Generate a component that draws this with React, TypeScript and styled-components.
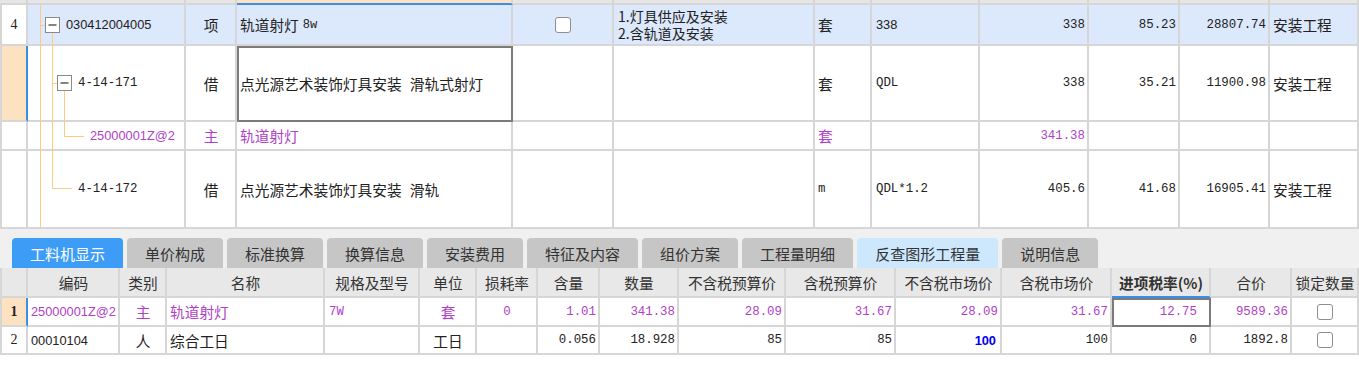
import React from "react";
import styled, { createGlobalStyle, css } from "styled-components";

const GlobalStyle = createGlobalStyle`
  html, body {
    margin: 0;
    padding: 0;
    background: #ffffff;
  }
  body {
    font-family: "Noto Sans CJK SC", "Noto Sans", sans-serif;
    color: #222222;
  }
`;

const LINE = "#d6d6d6";
const PURPLE = "#b040c8";
const PEACH = "#fde2c2";
const SELECT_BLUE = "#3a8ee6";

const TOP_COLS = "28px 158px 51px 276px 101px 201px 57px 108px 109px 91px 90px 89px";
const BOTTOM_COLS =
  "28px 92px 47px 158px 95px 57px 61px 62px 79px 107px 110px 106px 110px 99px 81px 67px";

type Font = "cjk" | "mono" | "sans" | "serif";
type Align = "left" | "center" | "right";

const fonts = {
  cjk: css`
    font-family: "Noto Sans CJK SC", sans-serif;
    font-size: 14.7px;
    word-spacing: 5px;
  `,
  mono: css`
    font-family: "Liberation Mono", "Noto Sans CJK SC", monospace;
    font-size: 12.4px;
  `,
  sans: css`
    font-family: "Liberation Sans", "Noto Sans CJK SC", sans-serif;
    font-size: 12.8px;
  `,
  serif: css`
    font-family: "Liberation Serif", serif;
    font-size: 14px;
  `,
};

const justify = { left: "flex-start", center: "center", right: "flex-end" };

const Page = styled.div`
  width: 1359px;
  display: flex;
  flex-direction: column;
`;

const TopTable = styled.div`
  position: relative;
  display: flex;
  flex-direction: column;
`;

const Row = styled.div<{ $cols: string; $h: number; $bg?: string }>`
  display: grid;
  grid-template-columns: ${(p) => p.$cols};
  height: ${(p) => p.$h}px;
  background: ${(p) => p.$bg ?? "#ffffff"};
`;

const Cell = styled.div<{
  $align?: Align;
  $color?: string;
  $font?: Font;
  $bold?: boolean;
  $focus?: boolean;
  $pl?: number;
  $pr?: number;
  $mark?: "row" | "col";
  $bg?: string;
}>`
  display: flex;
  align-items: center;
  justify-content: ${(p) => justify[p.$align ?? "left"]};
  box-sizing: border-box;
  min-width: 0;
  border-right: 2px solid ${LINE};
  border-bottom: 2px solid ${LINE};
  padding: 0 ${(p) => p.$pr ?? 2}px 0 ${(p) => p.$pl ?? 3}px;
  overflow: hidden;
  white-space: nowrap;
  color: ${(p) => p.$color ?? "#222222"};
  ${(p) => p.$bg && `background: ${p.$bg};`}
  ${(p) => fonts[p.$font ?? "cjk"]}
  font-weight: ${(p) => (p.$bold ? 700 : 400)};
  ${(p) =>
    p.$focus &&
    css`
      outline: 2px solid #7b7b7b;
      outline-offset: -2px;
    `}
  ${(p) =>
    p.$mark === "row" &&
    css`
      background: ${PEACH};
      border-right-color: ${SELECT_BLUE};
    `}
  ${(p) =>
    p.$mark === "col" &&
    css`
      background: ${PEACH};
      border-bottom-color: ${SELECT_BLUE};
    `}
`;

const RowNum = styled(Cell).attrs({ $align: "center" as Align, $font: "serif" as Font })`
  border-left: 2px solid ${LINE};
  padding: 0;
`;

const HeadCell = styled(Cell).attrs({ $align: "center" as Align })`
  background: #e8e8e8;
  color: #333333;
`;

const StripCell = styled.div<{ $active?: boolean }>`
  box-sizing: border-box;
  background: ${(p) => (p.$active ? PEACH : "#e6e6e6")};
  border-right: 2px solid ${LINE};
  border-bottom: 2px solid ${(p) => (p.$active ? SELECT_BLUE : LINE)};
`;

const Small = styled.span`
  font-family: "Liberation Mono", monospace;
  font-size: 12px;
  margin-left: 4px;
`;

const Lines = styled.div`
  display: flex;
  flex-direction: column;
  font-size: 14px;
  color: #222222;
`;

const Line = styled.div`
  height: 17px;
  line-height: 17px;
  overflow: visible;
`;

const Checkbox = styled.span`
  display: inline-block;
  box-sizing: border-box;
  width: 16px;
  height: 16px;
  border: 1px solid #8e8e8e;
  border-radius: 3px;
  background: #ffffff;
`;

const TreeLines = styled.svg`
  position: absolute;
  left: 28px;
  top: 0;
  pointer-events: none;
`;

const TabBar = styled.div`
  display: flex;
  align-items: flex-end;
  gap: 4px;
  height: 39px;
  box-sizing: border-box;
  padding: 9px 0 0 12px;
  background: #f0f0f0;
`;

const Tab = styled.div<{ $kind?: "active" | "hint" }>`
  height: 30px;
  padding: 0 18px;
  display: flex;
  align-items: center;
  border-radius: 4px 4px 0 0;
  font-family: "Noto Sans CJK SC", sans-serif;
  font-size: 15px;
  color: ${(p) => (p.$kind === "active" ? "#ffffff" : "#333333")};
  background: ${(p) =>
    p.$kind === "active" ? "#3d9cf5" : p.$kind === "hint" ? "#cde7fd" : "#c6c6c6"};
`;

const BottomTable = styled.div`
  display: flex;
  flex-direction: column;
`;

const Filler = styled.div`
  height: 10px;
  background: #ffffff;
`;

const TREE = "#ffc985";
const BOX = "#8a8a8a";

const Tree = () => (
  <TreeLines width={158} height={229} viewBox="0 0 158 229">
    <g stroke={TREE} strokeWidth={1} fill="none">
      <line x1={12.5} y1={5} x2={12.5} y2={227} />
      <line x1={12.5} y1={25.5} x2={17} y2={25.5} />
      <line x1={24.5} y1={33} x2={24.5} y2={188.5} />
      <line x1={24.5} y1={188.5} x2={44} y2={188.5} />
      <line x1={24.5} y1={83.5} x2={29} y2={83.5} />
      <line x1={36.5} y1={91} x2={36.5} y2={136.5} />
      <line x1={36.5} y1={136.5} x2={56} y2={136.5} />
    </g>
    <rect x={17.5} y={17.5} width={14} height={15} fill="#ffffff" stroke={BOX} />
    <line x1={20.5} y1={25} x2={28.5} y2={25} stroke="#333" strokeWidth={1.2} />
    <rect x={29.5} y={75.5} width={14} height={15} fill="#ffffff" stroke={BOX} />
    <line x1={32.5} y1={83} x2={40.5} y2={83} stroke="#333" strokeWidth={1.2} />
  </TreeLines>
);

const tabs = [
  "工料机显示",
  "单价构成",
  "标准换算",
  "换算信息",
  "安装费用",
  "特征及内容",
  "组价方案",
  "工程量明细",
  "反查图形工程量",
  "说明信息",
];

const headers = [
  "",
  "编码",
  "类别",
  "名称",
  "规格及型号",
  "单位",
  "损耗率",
  "含量",
  "数量",
  "不含税预算价",
  "含税预算价",
  "不含税市场价",
  "含税市场价",
  "进项税率(%)",
  "合价",
  "锁定数量",
];

const App: React.FC = () => {
  return (
    <Page>
      <GlobalStyle />
      <TopTable>
        <Row $cols={TOP_COLS} $h={5}>
          {Array.from({ length: 12 }).map((_, i) => (
            <StripCell key={i} $active={i === 3} />
          ))}
        </Row>

        <Row $cols={TOP_COLS} $h={41} $bg="#dce8fb">
          <RowNum $bg="#ffffff">4</RowNum>
          <Cell $font="sans" $pl={38}>030412004005</Cell>
          <Cell $align="center">项</Cell>
          <Cell>
            轨道射灯<Small>8w</Small>
          </Cell>
          <Cell $align="center">
            <Checkbox />
          </Cell>
          <Cell $pl={4}>
            <Lines>
              <Line>1.灯具供应及安装</Line>
              <Line>2.含轨道及安装</Line>
            </Lines>
          </Cell>
          <Cell>套</Cell>
          <Cell $font="sans" $pl={4}>338</Cell>
          <Cell $font="mono" $align="right">338</Cell>
          <Cell $font="mono" $align="right">85.23</Cell>
          <Cell $font="mono" $align="right">28807.74</Cell>
          <Cell>安装工程</Cell>
        </Row>

        <Row $cols={TOP_COLS} $h={76}>
          <RowNum $mark="row" />
          <Cell $font="mono" $pl={50}>4-14-171</Cell>
          <Cell $align="center">借</Cell>
          <Cell $focus>点光源艺术装饰灯具安装 滑轨式射灯</Cell>
          <Cell />
          <Cell />
          <Cell>套</Cell>
          <Cell $font="mono" $pl={4}>QDL</Cell>
          <Cell $font="mono" $align="right">338</Cell>
          <Cell $font="mono" $align="right">35.21</Cell>
          <Cell $font="mono" $align="right">11900.98</Cell>
          <Cell>安装工程</Cell>
        </Row>

        <Row $cols={TOP_COLS} $h={29}>
          <RowNum />
          <Cell $font="sans" $pl={62} $color={PURPLE}>25000001Z@2</Cell>
          <Cell $align="center" $color={PURPLE}>主</Cell>
          <Cell $color={PURPLE}>轨道射灯</Cell>
          <Cell />
          <Cell />
          <Cell $color={PURPLE}>套</Cell>
          <Cell />
          <Cell $font="mono" $align="right" $color={PURPLE}>341.38</Cell>
          <Cell />
          <Cell />
          <Cell />
        </Row>

        <Row $cols={TOP_COLS} $h={78}>
          <RowNum />
          <Cell $font="mono" $pl={50}>4-14-172</Cell>
          <Cell $align="center">借</Cell>
          <Cell>点光源艺术装饰灯具安装 滑轨</Cell>
          <Cell />
          <Cell />
          <Cell $font="mono">m</Cell>
          <Cell $font="mono" $pl={4}>QDL*1.2</Cell>
          <Cell $font="mono" $align="right">405.6</Cell>
          <Cell $font="mono" $align="right">41.68</Cell>
          <Cell $font="mono" $align="right">16905.41</Cell>
          <Cell>安装工程</Cell>
        </Row>

        <Tree />
      </TopTable>

      <TabBar>
        {tabs.map((t, i) => (
          <Tab key={t} $kind={i === 0 ? "active" : i === 8 ? "hint" : undefined}>
            {t}
          </Tab>
        ))}
      </TabBar>

      <BottomTable>
        <Row $cols={BOTTOM_COLS} $h={30}>
          {headers.map((h, i) =>
            i === 0 ? (
              <RowNum key={i} $bg="#e8e8e8" />
            ) : (
              <HeadCell key={i} $mark={i === 13 ? "col" : undefined} $bold={i === 13}>
                {h}
              </HeadCell>
            )
          )}
        </Row>

        <Row $cols={BOTTOM_COLS} $h={29}>
          <RowNum $mark="row" $bold>1</RowNum>
          <Cell $font="sans" $color={PURPLE}>25000001Z@2</Cell>
          <Cell $align="center" $color={PURPLE}>主</Cell>
          <Cell $color={PURPLE}>轨道射灯</Cell>
          <Cell $font="mono" $color={PURPLE} $pl={4}>7W</Cell>
          <Cell $align="center" $color={PURPLE}>套</Cell>
          <Cell $font="mono" $align="center" $color={PURPLE}>0</Cell>
          <Cell $font="mono" $align="right" $color={PURPLE}>1.01</Cell>
          <Cell $font="mono" $align="right" $color={PURPLE}>341.38</Cell>
          <Cell $font="mono" $align="right" $color={PURPLE}>28.09</Cell>
          <Cell $font="mono" $align="right" $color={PURPLE}>31.67</Cell>
          <Cell $font="mono" $align="right" $color={PURPLE}>28.09</Cell>
          <Cell $font="mono" $align="right" $color={PURPLE}>31.67</Cell>
          <Cell $font="mono" $align="right" $color={PURPLE} $focus $pr={12}>12.75</Cell>
          <Cell $font="mono" $align="right" $color={PURPLE}>9589.36</Cell>
          <Cell $align="center">
            <Checkbox />
          </Cell>
        </Row>

        <Row $cols={BOTTOM_COLS} $h={28}>
          <RowNum>2</RowNum>
          <Cell $font="sans">00010104</Cell>
          <Cell $align="center">人</Cell>
          <Cell>综合工日</Cell>
          <Cell />
          <Cell $align="center">工日</Cell>
          <Cell />
          <Cell $font="mono" $align="right">0.056</Cell>
          <Cell $font="mono" $align="right">18.928</Cell>
          <Cell $font="mono" $align="right">85</Cell>
          <Cell $font="mono" $align="right">85</Cell>
          <Cell $font="sans" $align="right" $color="#0000ee" $bold $pr={4}>100</Cell>
          <Cell $font="mono" $align="right">100</Cell>
          <Cell $font="mono" $align="right" $pr={12}>0</Cell>
          <Cell $font="mono" $align="right">1892.8</Cell>
          <Cell $align="center">
            <Checkbox />
          </Cell>
        </Row>
      </BottomTable>
      <Filler />
    </Page>
  );
};

export default App;
